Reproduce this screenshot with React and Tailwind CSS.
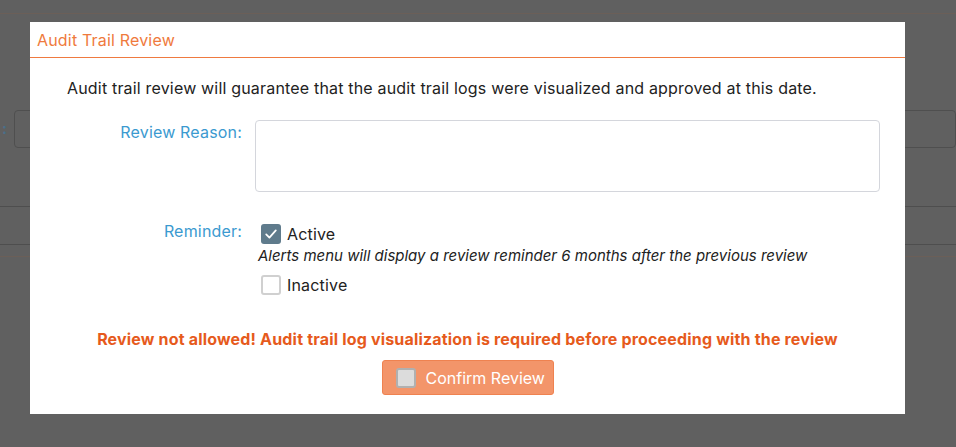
import { useState } from 'react'

// ─── Dimmed page behind the dialog ────────────────────────────────────────────

function BackdropPage() {
  return (
    <div className="min-h-[447px] w-full bg-[#606060]">
      <div className="h-[14px] border-b border-[#6b5f58]" />
      <div className="h-[96px]" />
      <div className="flex items-center h-[38px]">
        <span className="w-[14px] pl-[2px] text-[15px] font-bold text-[#4a6f8a]">:</span>
        <div className="flex-1 h-[38px] rounded-[4px] border border-[#4f4f4f]" />
      </div>
      <div className="h-[58px]" />
      <div className="h-[39px] border-y border-[#4e4e4e]" />
      <div className="h-[12px] border-b border-[#6b5f58]" />
    </div>
  )
}

// ─── Checkbox ─────────────────────────────────────────────────────────────────

function Check({ checked, onChange, label }) {
  return (
    <label className="flex items-center gap-[6px] cursor-pointer">
      <span
        onClick={onChange}
        className={`w-[20px] h-[20px] rounded-[3px] flex items-center justify-center ${
          checked ? 'bg-[#5f7b8c]' : 'bg-white border-2 border-[#d0d0d0]'
        }`}
      >
        {checked && (
          <svg viewBox="0 0 20 20" className="w-[16px] h-[16px]">
            <path d="M4 10.5l4 4 8-9" fill="none" stroke="white" strokeWidth="2.2" strokeLinecap="round" strokeLinejoin="round" />
          </svg>
        )}
      </span>
      <span className="text-[16px] text-[#222]">{label}</span>
    </label>
  )
}

// ─── Main component ───────────────────────────────────────────────────────────

export default function App() {
  const [active, setActive] = useState(true)

  return (
    <div
      className="relative w-[956px] h-[447px] overflow-hidden tracking-[0.18px]"
      style={{ fontFamily: 'Inter, "Noto Sans", sans-serif' }}
    >
      <BackdropPage />

      <div className="absolute left-[30px] top-[22px] w-[875px] h-[392px] bg-white">
        <div className="h-[36px] px-[7px] flex items-center border-b border-[#ef7a40]">
          <h2 className="text-[16px] text-[#ef7a3d]">Audit Trail Review</h2>
        </div>

        <div className="pl-[37px] pt-[18px] text-[16px] leading-[24px] text-[#222]">
          Audit trail review will guarantee that the audit trail logs were visualized and approved at this date.
        </div>

        <div className="flex mt-[20px]">
          <div className="w-[212px] text-right text-[16px] text-[#3b9ad0]">Review Reason:</div>
          <textarea className="ml-[13px] w-[625px] h-[72px] rounded-[4px] border border-[#d4d6dc] resize-none outline-none" />
        </div>

        <div className="flex mt-[30px]">
          <div className="w-[212px] text-right text-[16px] text-[#3b9ad0] mt-[-3px]">Reminder:</div>
          <div className="ml-[16px] flex flex-col">
            <div className="pl-[3px]">
              <Check checked={active} onChange={() => setActive(true)} label="Active" />
            </div>
            <p className="text-[15px] leading-[20px] tracking-normal italic text-[#222]">
              Alerts menu will display a review reminder 6 months after the previous review
            </p>
            <div className="pl-[3px] mt-[7px]">
              <Check checked={!active} onChange={() => setActive(false)} label="Inactive" />
            </div>
          </div>
        </div>

        <p className="mt-[31px] text-center text-[16px] leading-[22px] font-bold text-[#e65a1c]">
          Review not allowed! Audit trail log visualization is required before proceeding with the review
        </p>

        <div className="flex justify-center mt-[10px]">
          <button className="w-[172px] h-[35px] rounded-[3px] bg-[#f3956a] border border-[#ef8250] flex items-center pl-[13px] gap-[10px] cursor-not-allowed">
            <span className="w-[20px] h-[20px] rounded-[3px] bg-[#dcdcdc] border-2 border-[#b0b0b0]" />
            <span className="text-[16px] tracking-normal text-white">Confirm Review</span>
          </button>
        </div>
      </div>
    </div>
  )
}
